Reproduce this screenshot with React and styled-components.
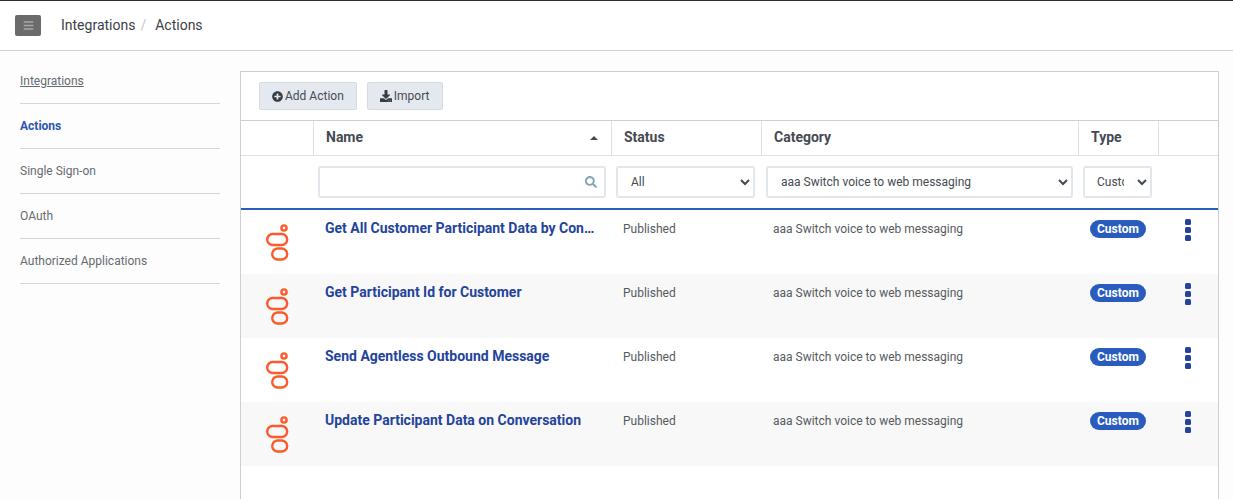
import React from "react";
import styled, { createGlobalStyle } from "styled-components";
import { FaBars, FaPlusCircle, FaDownload, FaSearch } from "react-icons/fa";

const COLUMNS = "72px 298px 150px 317px 80px 60px";

const actions = [
  "Get All Customer Participant Data by Conversation Id",
  "Get Participant Id for Customer",
  "Send Agentless Outbound Message",
  "Update Participant Data on Conversation",
];

const sideLinks = [
  { label: "Integrations", underline: true },
  { label: "Actions", active: true },
  { label: "Single Sign-on" },
  { label: "OAuth" },
  { label: "Authorized Applications" },
];

const GlobalStyle = createGlobalStyle`
  html, body {
    margin: 0;
    height: 100%;
    overflow: hidden;
    background: #fdfdfd;
    font-family: Roboto, "Liberation Sans", sans-serif;
    color: #444a54;
  }
  * {
    box-sizing: border-box;
  }
`;

const Page = styled.div`
  height: 499px;
  border-top: 1px solid #2b2f33;
  display: flex;
  flex-direction: column;
`;

const Header = styled.header`
  height: 50px;
  flex: none;
  background: #fff;
  border-bottom: 1px solid #cfcfcf;
  display: flex;
  align-items: center;
  padding: 0 0 2px 15px;
`;

const MenuButton = styled.div`
  width: 26px;
  height: 21px;
  margin-top: 2px;
  border-radius: 2px;
  background: #6b6b6b;
  color: #a9a9a9;
  display: flex;
  align-items: center;
  justify-content: center;
  font-size: 11px;
  margin-right: 20px;
`;

const Crumb = styled.span`
  font-size: 14px;
  color: #3c4148;
`;

const CrumbSep = styled.span`
  font-size: 14px;
  color: #c4c8cc;
  margin: 0 9px 0 5px;
`;

const Body = styled.div`
  flex: 1;
  display: flex;
  padding: 8px 14px 0 20px;
  min-height: 0;
`;

const Sidebar = styled.nav`
  width: 200px;
  flex: none;
  margin-right: 20px;
`;

const SideLink = styled.div`
  height: 45px;
  border-bottom: 1px solid #d5d5d5;
  display: flex;
  align-items: center;
  font-size: 12px;
  color: ${(p) => (p.$active ? "#2a55b5" : "#666b72")};
  font-weight: ${(p) => (p.$active ? 700 : 400)};
  text-decoration: ${(p) => (p.$underline ? "underline" : "none")};
`;

const Panel = styled.main`
  flex: 1;
  margin-top: 12px;
  background: #fff;
  border: 1px solid #cfcfcf;
  border-bottom: none;
  min-width: 0;
`;

const Toolbar = styled.div`
  height: 49px;
  border-bottom: 1px solid #d0d0d0;
  display: flex;
  align-items: flex-start;
  gap: 10px;
  padding: 10px 0 0 18px;
`;

const ToolButton = styled.button`
  height: 28px;
  padding: 0 ${(p) => p.$padRight || 12}px 0 12px;
  border: 1px solid #d6dbe2;
  border-radius: 2px;
  background: #e4e9ef;
  color: #444a54;
  font: 400 12px Roboto, sans-serif;
  display: flex;
  align-items: center;
  gap: 2px;
  svg {
    font-size: ${(p) => p.$icon || 11}px;
    color: #363c44;
  }
`;

const Row = styled.div`
  display: grid;
  grid-template-columns: ${COLUMNS};
`;

const HeadRow = styled(Row)`
  height: 35px;
  border-bottom: 1px solid #dde2e8;
`;

const HeadCell = styled.div`
  border-left: ${(p) => (p.$first ? "none" : "1px solid #dde2e8")};
  padding: 0 0 2px 12px;
  display: flex;
  align-items: center;
  justify-content: space-between;
  font-size: 14px;
  font-weight: 700;
  color: #454a52;
`;

const SortArrow = styled.i`
  width: 0;
  height: 0;
  margin-right: 13px;
  margin-top: 2px;
  border-left: 4px solid transparent;
  border-right: 4px solid transparent;
  border-bottom: 4px solid #454a52;
`;

const FilterRow = styled(Row)`
  height: 54px;
  border-bottom: 2px solid #2a5cc0;
  padding-top: 10px;
`;

const FilterCell = styled.div`
  padding: 0 ${(p) => p.$right || 5}px 0 5px;
  position: relative;
`;

const SearchInput = styled.input`
  width: 100%;
  height: 32px;
  border: 2px solid #e1e7ed;
  border-radius: 3px;
  background: #fff;
  outline: none;
`;

const SearchIcon = styled(FaSearch)`
  position: absolute;
  right: 14px;
  top: 10px;
  font-size: 12px;
  color: #7fa6b3;
`;

const FilterSelect = styled.select`
  width: 100%;
  height: 32px;
  border: 2px solid #e1e7ed;
  border-radius: 3px;
  background-color: #fff;
  color: #444a54;
  font: 400 12px Roboto, sans-serif;
  padding: 0 ${(p) => p.$padRight || 0}px 0 ${(p) => p.$padLeft || 9}px;
  outline: none;
`;

const DataRow = styled(Row)`
  height: 64px;
  background: ${(p) => (p.$shaded ? "#f8f8f8" : "#fff")};
`;

const LogoCell = styled.div`
  padding: 14px 0 0 23px;
`;

const NameCell = styled.div`
  padding: 10px 16px 0 12px;
  font-size: 14px;
  font-weight: 700;
  line-height: 17px;
  color: #24439c;
  white-space: nowrap;
  overflow: hidden;
  text-overflow: ellipsis;
`;

const TextCell = styled.div`
  padding: 12px 0 0 12px;
  font-size: 12px;
  line-height: 14px;
  color: #555a61;
`;

const BadgeCell = styled.div`
  padding: 8px 0 0 12px;
`;

const Badge = styled.span`
  display: inline-block;
  height: 18px;
  line-height: 18px;
  padding: 0 7px;
  border-radius: 9px;
  background: #2a5cc0;
  color: #fff;
  font-size: 12px;
  font-weight: 700;
`;

const KebabCell = styled.div`
  padding: 9px 0 0 26px;
`;

const GenesysLogo = () => (
  <svg width="26" height="38" viewBox="0 0 26 38" fill="none" stroke="#fc5a2c" strokeWidth="2.4">
    <circle cx="20" cy="4" r="2.6" />
    <rect x="3.2" y="10" width="20" height="11" rx="5.5" />
    <rect x="8.2" y="24.5" width="15" height="11" rx="5.5" />
  </svg>
);

const Kebab = () => (
  <svg width="8" height="22" viewBox="0 0 8 22" fill="#24439c">
    <rect x="1" y="0" width="6" height="6" rx="1.5" />
    <rect x="1" y="8" width="6" height="6" rx="1.5" />
    <rect x="1" y="16" width="6" height="6" rx="1.5" />
  </svg>
);

const App = () => (
  <Page>
    <GlobalStyle />
    <Header>
      <MenuButton>
        <FaBars />
      </MenuButton>
      <Crumb>Integrations</Crumb>
      <CrumbSep>/</CrumbSep>
      <Crumb>Actions</Crumb>
    </Header>
    <Body>
      <Sidebar>
        {sideLinks.map((link) => (
          <SideLink key={link.label} $active={link.active} $underline={link.underline}>
            {link.label}
          </SideLink>
        ))}
      </Sidebar>
      <Panel>
        <Toolbar>
          <ToolButton>
            <FaPlusCircle />
            Add Action
          </ToolButton>
          <ToolButton $icon={12} $padRight={13}>
            <FaDownload />
            Import
          </ToolButton>
        </Toolbar>
        <HeadRow>
          <HeadCell $first />
          <HeadCell>
            Name
            <SortArrow />
          </HeadCell>
          <HeadCell>Status</HeadCell>
          <HeadCell>Category</HeadCell>
          <HeadCell>Type</HeadCell>
          <HeadCell />
        </HeadRow>
        <FilterRow>
          <div />
          <FilterCell>
            <SearchInput />
            <SearchIcon />
          </FilterCell>
          <FilterCell $right={6}>
            <FilterSelect defaultValue="All">
              <option>All</option>
            </FilterSelect>
          </FilterCell>
          <FilterCell>
            <FilterSelect defaultValue="aaa">
              <option value="aaa">aaa Switch voice to web messaging</option>
            </FilterSelect>
          </FilterCell>
          <FilterCell $right={6}>
            <FilterSelect defaultValue="Custom" $padLeft={8} $padRight={10}>
              <option>Custom</option>
            </FilterSelect>
          </FilterCell>
          <div />
        </FilterRow>
        {actions.map((name, i) => (
          <DataRow key={name} $shaded={i % 2 === 1}>
            <LogoCell>
              <GenesysLogo />
            </LogoCell>
            <NameCell>{name}</NameCell>
            <TextCell>Published</TextCell>
            <TextCell>aaa Switch voice to web messaging</TextCell>
            <BadgeCell>
              <Badge>Custom</Badge>
            </BadgeCell>
            <KebabCell>
              <Kebab />
            </KebabCell>
          </DataRow>
        ))}
      </Panel>
    </Body>
  </Page>
);

export default App;
